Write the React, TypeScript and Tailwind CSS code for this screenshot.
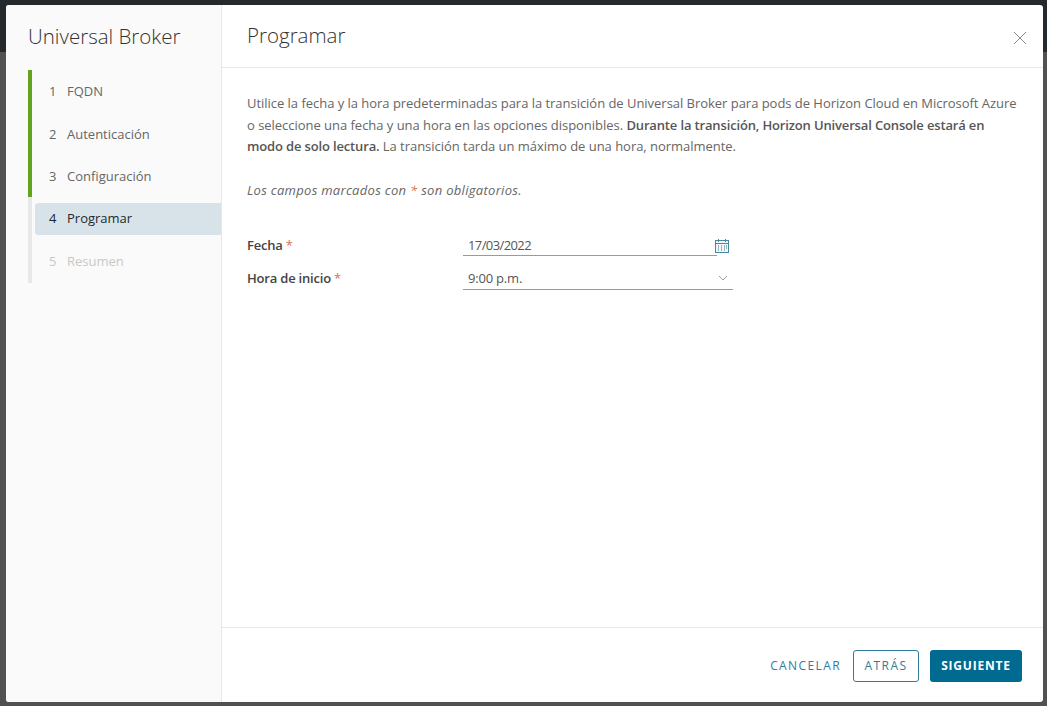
const font = { fontFamily: '"Open Sans", sans-serif' };

const steps = [
  { n: 1, label: "FQDN", state: "done" },
  { n: 2, label: "Autenticación", state: "done" },
  { n: 3, label: "Configuración", state: "done" },
  { n: 4, label: "Programar", state: "active" },
  { n: 5, label: "Resumen", state: "disabled" },
];

function CalendarIcon() {
  return (
    <svg className="-ml-[3px] shrink-0" width="16" height="16" viewBox="0 0 16 16" fill="none" stroke="#49879f" strokeWidth="1">
      <rect x="1.5" y="2.5" width="13" height="12" fill="#f2f7f9" />
      <path d="M1.5 5.5h13M4.5 1v3M11.5 1v3" />
      <path d="M4 8h1M7 8h1M10 8h1M12 8h1M4 10h1M7 10h1M10 10h1M12 10h1M4 12h1M7 12h1M10 12h1" stroke="#3d7288" />
    </svg>
  );
}

export default function App() {
  return (
    <div className="h-[706px] w-[1047px] overflow-hidden bg-[linear-gradient(#23292c_0,#23292c_52px,#515151_52px)] pl-[6px] pr-[4px] pt-[5px] pb-[4px]" style={font}>
      <div className="flex h-[697px] w-[1037px] overflow-hidden rounded-[3px] bg-white">
        <div className="w-[216px] shrink-0 border-r border-[#e8e8e8] bg-[#fafafa]">
          <div className="pl-[22px] pt-[17px] text-[20.5px] font-light leading-[28px] text-[#333333]">Universal Broker</div>
          <div className="relative mt-[20px] pb-[1px]">
            <div className="absolute left-[22px] top-0 h-[213px] w-[4px] bg-[#e8e8e8]" />
            <div className="absolute left-[22px] top-0 h-[127px] w-[4px] bg-[#62a420]" />
            <div className="flex flex-col gap-[10.33px] pl-[29px] pt-[6px]">
              {steps.map((s) => (
                <div
                  key={s.n}
                  className={
                    s.state === "active"
                      ? "flex h-[32px] items-center rounded-l-[3px] bg-[#d8e3e9] text-[13px] text-[#1b2a32]"
                      : s.state === "disabled"
                        ? "flex h-[32px] items-center text-[13px] text-[#c8c8c8]"
                        : "flex h-[32px] items-center text-[13px] text-[#666666]"
                  }
                >
                  <span className="w-[32px] pl-[14px]">{s.n}</span>
                  <span>{s.label}</span>
                </div>
              ))}
            </div>
          </div>
        </div>
        <div className="flex min-w-0 flex-1 flex-col">
          <div className="flex h-[63px] items-start justify-between border-b border-[#e8e8e8] pl-[25px] pr-[16px]">
            <div className="pt-[16px] text-[20.5px] font-light leading-[28px] text-[#333333]">Programar</div>
            <svg className="mt-[26px]" width="14" height="14" viewBox="0 0 14 14" stroke="#8c8c8c" strokeWidth="1" fill="none">
              <path d="M1 1l12 12M13 1L1 13" />
            </svg>
          </div>
          <div className="flex-1 pl-[25px] pr-[20px] pt-[25px] text-[13px] tracking-[-0.03px] text-[#666666]">
            <p className="leading-[21.6px]">
              Utilice la fecha y la hora predeterminadas para la transición de Universal Broker para pods de Horizon Cloud en Microsoft Azure o seleccione una fecha y una hora en las opciones disponibles. <b className="font-semibold tracking-[-0.15px] text-[#565656]">Durante la transición, Horizon Universal Console estará en modo de solo lectura.</b> La transición tarda un máximo de una hora, normalmente.
            </p>
            <p className="mt-[21px] italic leading-[22px] tracking-[0.3px]">
              Los campos marcados con <span className="text-[#d4705f]">*</span> son obligatorios.
            </p>
            <div className="mt-[34px] flex flex-col gap-[11px] text-[#444444]">
              <div className="flex h-[22px] items-center">
                <div className="w-[216px] font-semibold tracking-[-0.2px]">Fecha <span className="font-normal text-[#d4705f]">*</span></div>
                <div className="flex w-[270px] items-center">
                  <div className="h-[21px] w-[254px] shrink-0 border-b border-[#9a9a9a] pl-[5px] leading-[20px] tracking-[-0.6px] text-[#565656]">17/03/2022</div>
                  <CalendarIcon />
                </div>
              </div>
              <div className="flex h-[22px] items-center">
                <div className="w-[216px] font-semibold tracking-[-0.2px]">Hora de inicio <span className="font-normal text-[#d4705f]">*</span></div>
                <div className="flex h-[22px] w-[270px] items-center justify-between border-b border-[#9a9a9a] pl-[5px] pr-[5px] tracking-[-0.2px] text-[#565656]">
                  <span>9:00 p.m.</span>
                  <svg width="10" height="6" viewBox="0 0 10 6" fill="none" stroke="#a0a0a0">
                    <path d="M1 1l4 4 4-4" />
                  </svg>
                </div>
              </div>
            </div>
          </div>
          <div className="flex h-[75px] items-start justify-end border-t border-[#e8e8e8] pr-[21px] pt-[22px] text-[12px] tracking-[1.4px]">
            <button className="mr-[12px] h-[32px] text-[#2f7c9c]">CANCELAR</button>
            <button className="mr-[11px] h-[32px] w-[66px] rounded-[3px] border border-[#2f7c9c] text-[#2f7c9c]">ATRÁS</button>
            <button className="h-[32px] w-[92px] rounded-[3px] bg-[#006a91] font-bold tracking-[0.8px] text-white">SIGUIENTE</button>
          </div>
        </div>
      </div>
    </div>
  );
}
